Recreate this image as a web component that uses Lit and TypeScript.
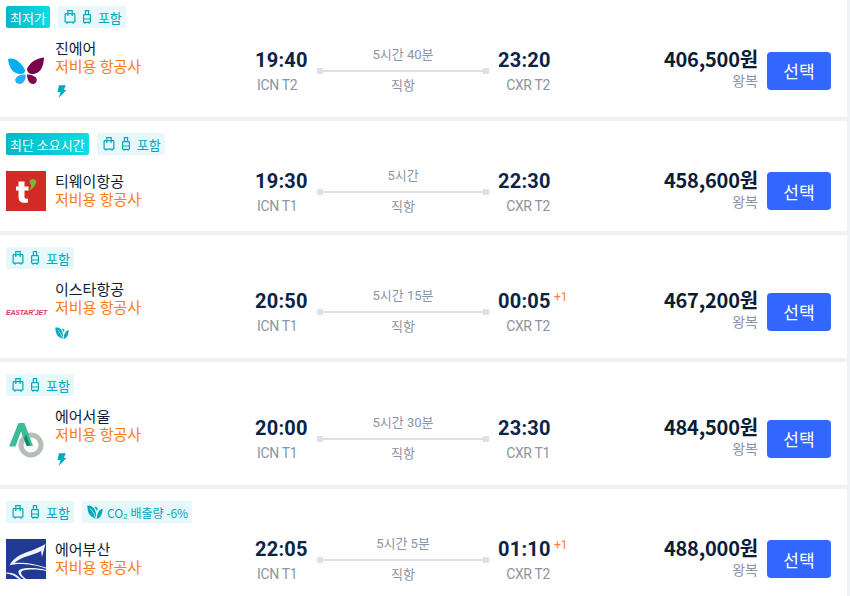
import { LitElement, html, css, svg } from "lit";
import { customElement } from "lit/decorators.js";

const bag = html`<svg class="bag" viewBox="0 0 12 14" width="12" height="14" fill="none" stroke="currentColor" stroke-width="1.2"><rect x="1.1" y="3.6" width="9.800" height="8.600" rx="0.8"/><path d="M3.800 3.600V0.700H8.200V3.600M3.800 3.600V6M8.200 3.600V6M3 12.200V13.800M9 12.200V13.800"/></svg>`;
const carry = html`<svg class="carry" viewBox="0 0 8 14" width="8" height="14" fill="none" stroke="currentColor" stroke-width="1.2"><rect x="0.6" y="4.6" width="6.800" height="7.800" rx="0.8"/><path d="M2.400 4.600V0.700H5.600V4.600M0.600 9H7.400M2 12.400V13.800M6 12.400V13.800"/></svg>`;
const leaf = (cls: string) => html`<svg class=${cls} viewBox="0 0 16 16" fill="currentColor">${svg`
  <path d="M0.500 1.500C6 1.500 9.500 5 9.200 14.500 4 14 0 9 0.500 1.500Z"/>
  <path d="M15.500 4.500C15.800 10 13.500 13.500 10 15 9.800 10 11.500 6 15.500 4.500Z"/>
  <path d="M8.500 2.500C9.500 3 10.500 4 11 5 10.300 5.700 10 6.300 9.700 7 9.300 5.500 8.700 4.500 7.700 3.500Z"/>
  <path d="M3 4.500C5.500 7 7.500 10 8.600 14" fill="none" stroke="#e7f8fb" stroke-width="0.800"/>`}</svg>`;
const bolt = html`<svg class="eco" viewBox="0 0 13 13" fill="currentColor"><path d="M4 0.200H10.800L8.800 4.800H11.500L3.800 13 5.500 7H2.500Z"/></svg>`;

const logos: Record<string, unknown> = {
  jin: html`<svg class="logo" viewBox="0 0 40 40">
    <path d="M2 8C8 6 15 11 19 19 19 22 17 23 14.500 23 8 23 3 18 2 8Z" fill="#02aef2"/>
    <path d="M19.500 23.500C20.500 27 18 32.500 14 33 10 33 8.500 30 9.500 27.500 11 24.500 16 23 19.500 23.500Z" fill="#22b4f2"/>
    <path d="M38 6.500C37.500 14 36 21 28 23 24 23.500 21 21.500 21 18 24 11 30 7.500 38 6.500Z" fill="#7a0048"/>
    <path d="M21 23.500C25 23.500 29 25 30.500 27.500 31.500 30.500 29.500 33 27 33 23 33 21 28 21 23.500Z" fill="#7d0a4f"/></svg>`,
  tway: html`<svg class="logo" viewBox="0 0 40 40"><rect width="40" height="40" fill="#d22b26"/>
    <path d="M12.500 10.500H18.500V15.500H22.500V19.500H18.500V26C18.500 27.500 19.500 28 22 27.500V31.500C15 32.500 12.500 30.500 12.500 26V19.500H10V15.500H12.500Z" fill="#fff"/>
    <path d="M25 8.500C28 7.500 31 8.500 30 12 29 15.500 26 18.500 22.500 20 24.500 17 25.500 15 25 13.500 23 12.500 23 9.500 25 8.500Z" fill="#7fb236"/></svg>`,
  eastar: html`<span class="eastar">EASTAR<i>*</i>JET</span>`,
  seoul: html`<svg class="logo" viewBox="0 0 40 40"><circle cx="25" cy="26" r="10" fill="none" stroke="#b6bfb6" stroke-width="5"/>
    <path d="M3 27.500 12.500 4H18.500L27 27H20.500L15 12.500 9.500 27.500Z" fill="#3fbb97"/>
    <path d="M20 15.500 24 26 21 27 18 20Z" fill="#0e8a6b"/></svg>`,
  busan: html`<svg class="logo" viewBox="0 0 40 40"><rect width="40" height="40" fill="#213a93"/>
    <path d="M39.500 5C30 11 18 13 11 18 8 20 5 23 3.500 26.500 10 24.500 22 24 40 29.500V28.500C28 24.500 18 23 8.500 24 14 18 28 16 35 12L36 18Z" fill="#f2f5fb"/>
    <path d="M40 31C30 28.500 20 28.500 14 30.500 11 32 12 36 18 40H20C15 36 13.500 33.500 17 31.500 23 30 32 30 40 32Z" fill="#f2f5fb"/>
    <path d="M0 33.500C6 33 11 35 15 40H12.500C9 37 5 35 0 34.500Z" fill="#e6ebf7"/></svg>`,
};

interface Flight {
  tags: string[]; logo: string; name: string; eco?: "bolt" | "leaf";
  dep: string; depAp: string; dur: string; arr: string; arrAp: string; plus?: boolean; price: string;
}

const flights: Flight[] = [
  { tags: ["최저가"], logo: "jin", name: "진에어", eco: "bolt", dep: "19:40", depAp: "ICN T2", dur: "5시간 40분", arr: "23:20", arrAp: "CXR T2", price: "406,500원" },
  { tags: ["최단 소요시간"], logo: "tway", name: "티웨이항공", dep: "19:30", depAp: "ICN T1", dur: "5시간", arr: "22:30", arrAp: "CXR T2", price: "458,600원" },
  { tags: [], logo: "eastar", name: "이스타항공", eco: "leaf", dep: "20:50", depAp: "ICN T1", dur: "5시간 15분", arr: "00:05", arrAp: "CXR T2", plus: true, price: "467,200원" },
  { tags: [], logo: "seoul", name: "에어서울", eco: "bolt", dep: "20:00", depAp: "ICN T1", dur: "5시간 30분", arr: "23:30", arrAp: "CXR T1", price: "484,500원" },
  { tags: ["co2"], logo: "busan", name: "에어부산", dep: "22:05", depAp: "ICN T1", dur: "5시간 5분", arr: "01:10", arrAp: "CXR T2", plus: true, price: "488,000원" },
];

@customElement("app-root")
export class AppRoot extends LitElement {
  static styles = css`
    :host { display: block; width: 850px; height: 596px; overflow: hidden; background: #f0f1f5;
      font-family: Roboto, "Noto Sans CJK KR", sans-serif; color: #0b2347; }
    .list { display: flex; flex-direction: column; gap: 4px; width: 847px; }
    .row { background: #fff; padding: 12px 16px 16px 6px; flex: none; }
    .row:first-child { padding-top: 6px; }
    .tags { display: flex; gap: 8px; height: 22px; margin-bottom: 12px; }
    .tag { display: flex; align-items: center; height: 22px; border-radius: 2px; padding: 0 4px 0 6px; font-size: 13px;
      font-family: "Noto Sans CJK KR", sans-serif; background: #e7f8fb; color: #00a7bd; box-sizing: border-box; white-space: nowrap; }
    .tag.best { background: linear-gradient(90deg, #00b7c8, #0bdde4); color: #fff; padding: 0 4px; }
    .bag { flex: none; margin-right: 7px; }
    .carry { flex: none; margin-right: 7px; }
    .co2 { gap: 4px; font-size: 12px; padding: 0 4px 0 5px; }
    .co2-leaf { width: 16px; height: 16px; flex: none; }
    .main { display: flex; align-items: center; min-height: 48px; }
    .airline { display: flex; align-items: center; width: 249px; flex: none; }
    .logo { width: 40px; height: 40px; flex: none; display: block; }
    .eastar { width: 40px; flex: none; font: italic 700 7px "Liberation Sans", sans-serif; color: #d93a63; white-space: nowrap; letter-spacing: -0.200px; }
    .eastar i { font-size: 5px; vertical-align: 2px; color: #e2603f; }
    .info { margin: -2px 0 0 9px; font-family: "Noto Sans CJK KR", sans-serif; font-size: 15px; line-height: 18px; }
    .info.with-eco { margin-top: -1px; }
    .name { color: #0b1c36; }
    .lcc { color: #ff7a14; }
    .eco { width: 13px; height: 13px; display: block; color: #00a7bd; margin: 10px 0 3px 0; }
    .eco.leafy { width: 14px; height: 14px; margin: 10px 0 2px 0; }
    .flight { display: flex; align-items: flex-start; width: 296px; flex: none; }
    .pt { width: 53px; flex: none; position: relative; margin-top: 1px; }
    .time { font-size: 20px; line-height: 24px; font-weight: 700; color: #0b2347; letter-spacing: 0.250px; white-space: nowrap; }
    .ap { font-size: 14px; line-height: 18px; margin-top: 4px; color: #8a95a6; letter-spacing: -0.350px; white-space: nowrap; padding-left: 2px; }
    .pt.right .ap { text-align: right; padding: 0 1px 0 0; }
    .plus { position: absolute; left: 56px; top: 1px; font-size: 12px; line-height: 14px; color: #ff7a45; }
    .mid { flex: 1; margin: 0 9px; display: flex; flex-direction: column; align-items: center; font-size: 13px; color: #8a95a6; }
    .dur { line-height: 16px; height: 16px; font-family: Roboto, "Noto Sans CJK KR", sans-serif; }
    .bar { align-self: stretch; display: flex; align-items: center; height: 6px; margin: 5px 0 0; }
    .bar i { width: 6px; height: 6px; background: #dce0e7; flex: none; }
    .bar b { flex: 1; height: 2px; background: #dce0e7; }
    .via { margin-top: 2px; line-height: 18px; font-family: "Noto Sans CJK KR", sans-serif; }
    .right-col { flex: 1; display: flex; align-items: center; justify-content: flex-end; gap: 9px; }
    .fare { text-align: right; font-family: "Noto Sans CJK KR", sans-serif; padding-bottom: 4px; }
    .price { font-size: 20px; line-height: 22px; font-weight: 700; color: #0b1c36; white-space: nowrap; letter-spacing: -0.200px; margin-bottom: 1px; }
    .trip { font-size: 14px; line-height: 18px; color: #8a95a6; }
    button { width: 64px; height: 38px; border: 0; border-radius: 4px; background: #3366ff; color: #fff; padding: 0;
      font: 17px "Noto Sans CJK KR", sans-serif; }
  `;

  render() {
    return html`<div class="list">${flights.map((f) => html`
      <section class="row">
        <div class="tags">
          ${f.tags.filter((t) => t !== "co2").map((t) => html`<span class="tag best">${t}</span>`)}
          <span class="tag">${bag}${carry}<span>포함</span></span>
          ${f.tags.includes("co2") ? html`<span class="tag co2">${leaf("co2-leaf")}<span>CO₂ 배출량 -6%</span></span>` : null}
        </div>
        <div class="main">
          <div class="airline">
            ${logos[f.logo]}
            <div class="info ${f.eco ? "with-eco" : ""}">
              <div class="name">${f.name}</div>
              <div class="lcc">저비용 항공사</div>
              ${f.eco === "bolt" ? bolt : f.eco === "leaf" ? leaf("eco leafy") : null}
            </div>
          </div>
          <div class="flight">
            <div class="pt"><div class="time">${f.dep}</div><div class="ap">${f.depAp}</div></div>
            <div class="mid"><div class="dur">${f.dur}</div><div class="bar"><i></i><b></b><i></i></div><div class="via">직항</div></div>
            <div class="pt right"><div class="time">${f.arr}</div><div class="ap">${f.arrAp}</div>${f.plus ? html`<span class="plus">+1</span>` : null}</div>
          </div>
          <div class="right-col">
            <div class="fare"><div class="price">${f.price}</div><div class="trip">왕복</div></div>
            <button>선택</button>
          </div>
        </div>
      </section>`)}</div>`;
  }
}
